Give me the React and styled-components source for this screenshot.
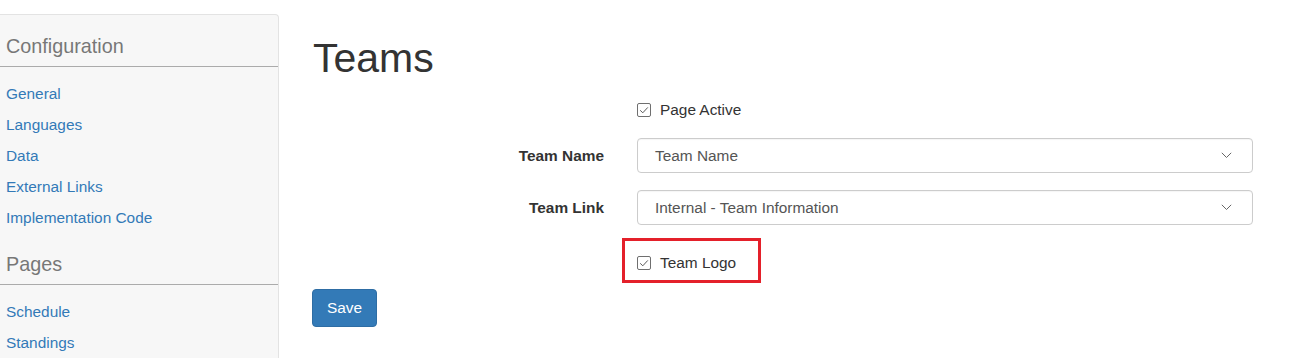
import React from "react";
import styled, { createGlobalStyle } from "styled-components";

const GlobalStyle = createGlobalStyle`
  html, body {
    margin: 0;
    padding: 0;
    overflow: hidden;
    background: #fff;
  }
  body {
    font-family: "Liberation Sans", Arial, sans-serif;
    font-size: 15.4px;
    color: #333;
  }
  * { box-sizing: border-box; }
`;

const Page = styled.div`
  display: flex;
  align-items: flex-start;
  width: 1290px;
  height: 358px;
`;

const Sidebar = styled.nav`
  flex: 0 0 279px;
  margin-top: 14px;
  height: 344px;
  background: #f7f7f7;
  border: 1px solid #e3e3e3;
  border-left: none;
  border-bottom: none;
  border-top-right-radius: 4px;
`;

const Section = styled.section`
  padding-top: 20px;
`;

const SectionTitle = styled.h4`
  margin: 0 0 9px;
  padding-left: 6px;
  font-size: 19.8px;
  line-height: 22px;
  font-weight: normal;
  color: #777;
`;

const Rule = styled.hr`
  margin: 0;
  border: none;
  border-top: 1px solid #ababab;
`;

const LinkList = styled.ul`
  list-style: none;
  margin: 11px 0 0;
  padding: 0 0 0 6px;
`;

const LinkItem = styled.li`
  line-height: 31px;
  height: 31px;
`;

const NavLink = styled.a`
  color: #337ab7;
  text-decoration: none;
  font-size: 15.4px;
`;

const Main = styled.main`
  flex: 1;
  padding: 0 22px 0 33px;
`;

const Title = styled.h1`
  margin: 36px 0 18px;
  font-size: 41px;
  line-height: 44px;
  font-weight: normal;
  color: #333;
  padding-left: 1px;
`;

const FormRow = styled.div`
  display: grid;
  grid-template-columns: 310px 1fr;
  align-items: center;
  margin-bottom: ${(p) => p.$gap ?? 17}px;
`;

const Label = styled.label`
  text-align: right;
  padding-right: 18px;
  font-weight: bold;
  font-size: 15.4px;
  color: #333;
`;

const Field = styled.div`
  grid-column: 2;
  padding: 0 15px;
`;

const HighlightField = styled.div`
  grid-column: 2;
`;

const CheckLabel = styled.label`
  display: inline-flex;
  align-items: center;
  gap: 9px;
  line-height: 23px;
  font-size: 15.4px;
  color: #333;
`;

const Highlight = styled.div`
  display: inline-flex;
  align-items: center;
  border: 3px solid #e4202a;
  padding: 10px 22px 6px 12px;
`;

const Select = styled.div`
  display: flex;
  align-items: center;
  justify-content: space-between;
  height: 35px;
  padding: 0 20px 0 17px;
  border: 1px solid #ccc;
  border-radius: 4px;
  background: #fff;
  color: #555;
  font-size: 15.4px;
  box-shadow: inset 0 1px 1px rgba(0, 0, 0, 0.04);
`;

const SaveButton = styled.button`
  height: 38px;
  padding: 0 14px;
  border: 1px solid #2e6da4;
  border-radius: 4px;
  background: #337ab7;
  color: #fff;
  font-family: "Liberation Sans", Arial, sans-serif;
  font-size: 15.4px;
  cursor: pointer;
`;

const Checkbox = () => (
  <svg width="14" height="14" viewBox="0 0 14 14" aria-hidden="true">
    <rect x="0.5" y="0.5" width="13" height="13" rx="1.5" fill="#fff" stroke="#6f6f6f" />
    <path d="M3.2 7.3 L5.8 9.8 L10.8 4.4" fill="none" stroke="#5a5a5a" strokeWidth="1" />
  </svg>
);

const Chevron = () => (
  <svg width="11" height="7" viewBox="0 0 11 7" aria-hidden="true">
    <path d="M0.8 0.8 L5.5 5.5 L10.2 0.8" fill="none" stroke="#666" strokeWidth="1" />
  </svg>
);

const sections = [
  {
    title: "Configuration",
    links: ["General", "Languages", "Data", "External Links", "Implementation Code"],
  },
  { title: "Pages", links: ["Schedule", "Standings"] },
];

export default function App() {
  return (
    <>
      <GlobalStyle />
      <Page>
        <Sidebar>
          {sections.map((s) => (
            <Section key={s.title}>
              <SectionTitle>{s.title}</SectionTitle>
              <Rule />
              <LinkList>
                {s.links.map((l) => (
                  <LinkItem key={l}>
                    <NavLink href="#">{l}</NavLink>
                  </LinkItem>
                ))}
              </LinkList>
            </Section>
          ))}
        </Sidebar>
        <Main>
          <Title>Teams</Title>
          <FormRow>
            <Field>
              <CheckLabel>
                <Checkbox />
                Page Active
              </CheckLabel>
            </Field>
          </FormRow>
          <FormRow>
            <Label>Team Name</Label>
            <Field>
              <Select>
                <span>Team Name</span>
                <Chevron />
              </Select>
            </Field>
          </FormRow>
          <FormRow $gap={13}>
            <Label>Team Link</Label>
            <Field>
              <Select>
                <span>Internal - Team Information</span>
                <Chevron />
              </Select>
            </Field>
          </FormRow>
          <FormRow $gap={6}>
            <HighlightField>
              <Highlight>
                <CheckLabel>
                  <Checkbox />
                  Team Logo
                </CheckLabel>
              </Highlight>
            </HighlightField>
          </FormRow>
          <SaveButton>Save</SaveButton>
        </Main>
      </Page>
    </>
  );
}
